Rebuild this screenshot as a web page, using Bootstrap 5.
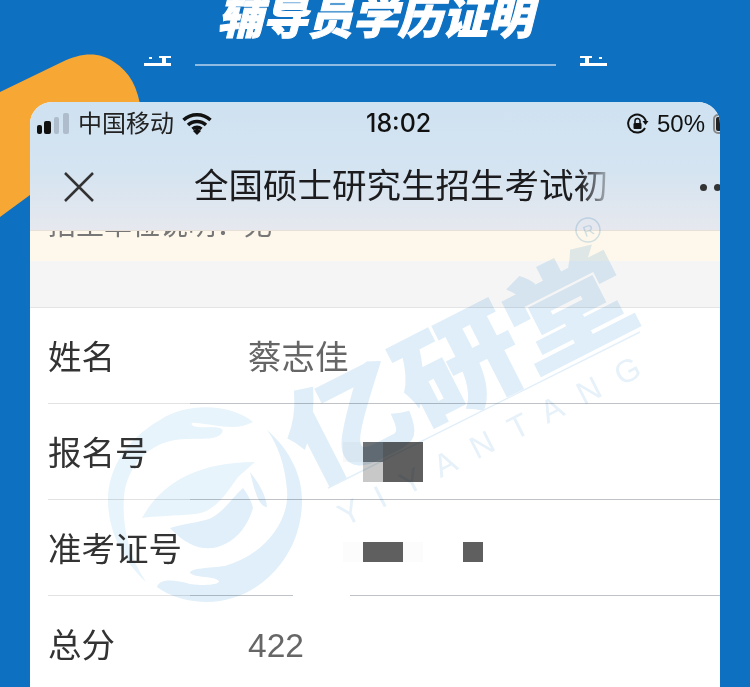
<!DOCTYPE html>
<html lang="zh">
<head>
  <meta charset="UTF-8">
  <title>辅导员学历证明</title>
  <link href="https://cdn.jsdelivr.net/npm/bootstrap@5.3.0/dist/css/bootstrap.min.css" rel="stylesheet">
  <style>
    html, body { height: 100%; }
    body {
      background: #0d70c1;
      overflow: hidden;
      position: relative;
      font-family: "Liberation Sans", "Noto Sans CJK SC", sans-serif;
    }
    .blob { position: absolute; left: 0; top: 0; }
    .head-title {
      height: 40px; color: #fff; font-size: 45px; font-weight: 900; font-style: italic;
      line-height: 37px; text-align: center; position: relative; -webkit-text-stroke: 1px #fff;
    }
    .rule-row { height: 50px; padding-top: 15px; position: relative; }
    .rule-line { width: 361px; height: 2px; background: #8fbbe2; margin-top: 9px; }
    .rule-mark { width: 27px; height: 12px; }
    .phone {
      position: absolute; left: 30px; top: 102px; width: 690px; height: 600px;
      background: #fff; border-radius: 22px 22px 0 0; overflow: hidden;
    }
    .top-glass { height: 129px; background: linear-gradient(180deg, #cfe2f1 0%, #d5e4f1 55%, #e6e8ee 100%); border-bottom: 1px solid #e6e0d8; }
    .status-bar { height: 42px; padding: 2px 0 0 6px; color: #111; font-size: 24px; }
    .carrier { color: #222; margin-left: 9px; }
    .clock { font-size: 25px; font-weight: 500; font-family: "Inter", sans-serif; margin-left: 154px; }
    .nav-strip { height: 86px; padding-left: 34px; }
    .nav-name {
      font-size: 34.500px; color: #1c1c1e; width: 416px; overflow: hidden; white-space: nowrap; margin-left: 100px;
      -webkit-mask-image: linear-gradient(90deg, #000 385px, rgba(0,0,0,.25) 414px);
      mask-image: linear-gradient(90deg, #000 385px, rgba(0,0,0,.25) 414px);
    }
    .more-dots { margin-left: 90px; gap: 7px; flex: none; }
    .more-dots i { width: 7px; height: 7px; border-radius: 50%; background: #333; display: block; }
    .notice { height: 30px; background: #fef8ec; color: #777; font-size: 28px; line-height: 1; padding-left: 18px; overflow: hidden; }
    .notice span { display: block; margin-top: -19px; }
    .gap-band { height: 47px; background: #f5f5f5; border-bottom: 1px solid #e4e4e4; }
    .info-row {
      height: 96px; margin-left: 18px; padding-top: 4px; color: #333; font-size: 33.500px;
      background: linear-gradient(90deg, #e2e2e2 142px, #bfc3c7 142px) bottom / 100% 1px no-repeat;
    }
    .line-gap { background-image: linear-gradient(90deg, #e2e2e2 142px, #bfc3c7 142px, #bfc3c7 245px, #fff 245px, #fff 302px, #bfc3c7 302px); }
    .info-label { width: 200px; flex: none; }
    .info-val { color: #666; }
    .pix-grid { display: grid; grid-template-columns: repeat(7, 20px); grid-auto-rows: 20px; margin-left: 95px; }
    .pix-two { margin-top: 16px; }
    .pix-one { margin-top: 4px; }
    .px-dark { background: #5f5f5f; }
    .px-slate { background: #6c7176; }
    .px-light { background: #c8c8c8; }
    .px-pale { background: #f8f8f8; }
    .px-faint { background: #fcfcfc; }
    .wm { position: absolute; left: 0; top: 0; pointer-events: none; mix-blend-mode: multiply; }
    .wm-cn { font-family: "Noto Sans CJK SC", sans-serif; font-weight: 900; font-size: 124px; fill: #dfeef9; stroke: #dfeef9; stroke-width: 2px; }
    .wm-en { font-family: "Liberation Sans", sans-serif; font-size: 32px; fill: #e6f1f9; }
    .wm-r { font-family: "Liberation Sans", sans-serif; font-size: 15px; fill: #d3e6f2; }
  </style>
</head>
<body>
  <svg class="blob" width="150" height="230" viewBox="0 0 150 230"><path d="M0 92L62 62C82 52 100 52 114 62C130 72 138 88 141 110V195H30L0 217Z" fill="#f6a734"/></svg>
  <div class="head-title">辅导员学历证明</div>
  <div class="rule-row d-flex justify-content-center gap-4">
    <svg class="rule-mark" viewBox="0 0 27 12"><path d="M0 8h27v3H0zM5 2h3v2H5zM15 1h12v2H15zM18 3h4v5h-4z" fill="#fff"/></svg>
    <div class="rule-line"></div>
    <svg class="rule-mark" viewBox="0 0 27 12"><path d="M0 8h27v3H0zM19 2h3v2h-3zM0 1h12v2H0zM5 3h4v5H5z" fill="#fff"/></svg>
  </div>

  <div class="phone">
    <div class="top-glass">
      <div class="status-bar d-flex align-items-center">
        <svg width="33" height="24" viewBox="0 0 33 24"><rect x="1" y="13" width="5" height="9" rx="2" fill="#111"/><rect x="8" y="9" width="7" height="13" rx="2" fill="#111"/><rect x="18" y="5" width="5" height="17" rx="2" fill="#aebccb"/><rect x="27" y="1" width="6" height="21" rx="2" fill="#aebccb"/></svg>
        <span class="carrier">中国移动</span>
        <svg width="30" height="24" viewBox="0 0 30 24" class="ms-2"><path d="M1.500 8a20 20 0 0 1 27 0M6 13a13 13 0 0 1 18 0M10.500 17a7 7 0 0 1 9 0" fill="none" stroke="#111" stroke-width="3.500"/><path d="M11 19l4-3 4 3-4 4z" fill="#111"/></svg>
        <span class="clock">18:02</span>
        <div class="ms-auto d-flex align-items-center">
          <svg width="22" height="22" viewBox="0 0 22 22"><path d="M18 15a9 9 0 1 1 1-6" fill="none" stroke="#111" stroke-width="2"/><path d="M15.500 8h6l-3 4z" fill="#111"/><rect x="6.500" y="10" width="8" height="6" rx="1" fill="#111"/><path d="M8 10V8a2.500 2.500 0 0 1 5 0v2" fill="none" stroke="#111" stroke-width="1.500"/></svg>
          <span class="ms-2">50%</span>
          <svg width="7" height="22" viewBox="0 0 7 22" class="ms-2"><rect x="1" y="2" width="16" height="18" rx="4" fill="none" stroke="#888" stroke-width="2"/><rect x="3" y="4" width="8" height="14" rx="2" fill="#222"/></svg>
        </div>
      </div>
      <div class="nav-strip d-flex align-items-center">
        <svg width="30" height="30" viewBox="0 0 30 30" class="flex-shrink-0"><path d="M1 1l28 28M29 1L1 29" stroke="#333" stroke-width="2.500"/></svg>
        <div class="nav-name flex-shrink-0">全国硕士研究生招生考试初</div>
        <div class="more-dots d-flex"><i></i><i></i><i></i></div>
      </div>
    </div>
    <div class="notice"><span>招生单位说明：无</span></div>
    <div class="gap-band"></div>
    <div class="info-row d-flex align-items-center"><div class="info-label">姓名</div><div class="info-val">蔡志佳</div></div>
    <div class="info-row d-flex align-items-center">
      <div class="info-label">报名号</div>
      <div class="pix-grid pix-two">
        <div class="px-pale"></div><div class="px-slate"></div><div class="px-dark"></div><div class="px-dark"></div><div></div><div></div><div></div>
        <div></div><div class="px-light"></div><div class="px-dark"></div><div class="px-dark"></div>
      </div>
    </div>
    <div class="info-row line-gap d-flex align-items-center">
      <div class="info-label">准考证号</div>
      <div class="pix-grid pix-one">
        <div class="px-faint"></div><div class="px-dark"></div><div class="px-dark"></div><div class="px-faint"></div><div></div><div></div><div class="px-dark"></div>
      </div>
    </div>
    <div class="info-row d-flex align-items-center"><div class="info-label">总分</div><div class="info-val">422</div></div>
  </div>

  <svg class="wm" width="750" height="687" viewBox="0 0 750 687">
    <path d="M253 422C235 406 190 400 160 420C125 440 108 470 108 500C108 530 122 560 146 582C128 555 122 525 124 497C126 470 145 445 175 440C195 437 215 442 222 433C226 425 210 428 198 427C190 426 190 422 195 423C215 424 235 432 253 422Z" fill="#e8f4fb"/>
    <path d="M267 430C290 450 302 475 302 500C302 560 255 602 207 602C190 602 170 597 157 587C160 578 175 580 190 584C205 586 220 585 219 581C215 576 195 578 190 573C190 568 210 568 225 566C265 555 290 520 287 490C285 465 278 445 267 430Z" fill="#e0eff9"/>
    <path d="M142 518C160 485 195 462 255 462L238 477C225 495 215 512 195 514C175 516 155 516 142 518Z" fill="#e8f4fb"/>
    <path d="M170 528C190 522 205 522 213 517C225 510 232 498 243 488C248 495 252 502 253 508C248 525 238 538 225 544C210 552 190 550 170 528Z" fill="#e0eff9"/>
    <path d="M250 472C258 482 266 495 267 507C260 507 256 497 250 472Z" fill="#e0eff9"/>
    <text class="wm-cn" transform="translate(311 485) rotate(-27) scale(1 .86)">亿研堂</text>
    <path d="M328 488L640 332" stroke="#e3f0f9" stroke-width="1.500"/>
    <text class="wm-en" transform="translate(345 527) rotate(-27)" textLength="335">YIYANTANG</text>
    <circle cx="588" cy="230" r="12" fill="none" stroke="#d3e6f2" stroke-width="1.500"/>
    <text class="wm-r" x="583" y="236" transform="rotate(-20 588 230)">R</text>
  </svg>
</body>
</html>
